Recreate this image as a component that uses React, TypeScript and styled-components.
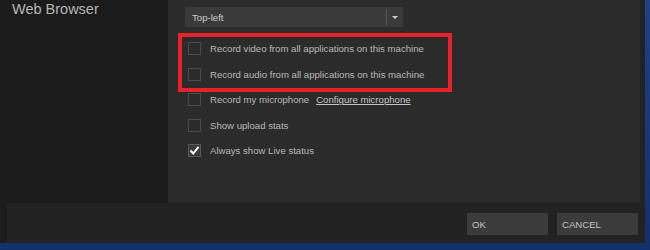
import React, { useState } from 'react';
import styled, { createGlobalStyle } from 'styled-components';

const GlobalStyle = createGlobalStyle`
   html, body {
      margin: 0;
      padding: 0;
      background: #173a78;
      overflow: hidden;
   }

   * {
      box-sizing: border-box;
   }
`;

const Desktop = styled.div`
   width: 650px;
   height: 250px;
   display: flex;
   align-items: flex-start;
   background: linear-gradient(180deg, #1d4288 0%, #12306a 100%);
   font-family: 'Liberation Sans', Arial, sans-serif;
`;

const Window = styled.div`
   width: 645px;
   height: 243px;
   display: flex;
   flex-direction: column;
   background: #222222;
   border-left: 7px solid #1c1c1c;
`;

const Main = styled.div`
   display: flex;
   height: 203px;
   padding-right: 5px;
`;

const Sidebar = styled.div`
   width: 161px;
   background: #1b1b1b;
   padding: 2px 0 0 5px;
`;

const Title = styled.div`
   font-size: 14.5px;
   line-height: 1;
   color: #b4b4b4;
`;

const Panel = styled.div`
   flex: 1;
   background: #2b2b2b;
   padding: 7px 0 0 17px;
`;

const Dropdown = styled.div`
   width: 218px;
   height: 20px;
   display: flex;
   align-items: center;
   background: #3a3a3a;
   color: #cccccc;
   font-size: 9.6px;
`;

const DropdownLabel = styled.span`
   flex: 1;
   padding-left: 7px;
`;

const DropdownArrow = styled.span`
   width: 16px;
   height: 16px;
   display: flex;
   align-items: center;
   justify-content: center;
   border-left: 1px solid #555555;
   margin-right: 1px;

   &::after {
      content: '';
      border-left: 3px solid transparent;
      border-right: 3px solid transparent;
      border-top: 3px solid #d0d0d0;
   }
`;

const CheckList = styled.div`
   display: flex;
   flex-direction: column;
   margin-top: 9px;
   padding-left: 3px;
`;

const Highlight = styled.div`
   position: relative;

   &::after {
      content: '';
      position: absolute;
      top: -3px;
      bottom: -5px;
      left: -10px;
      width: 266px;
      border: 4px solid #e8212b;
      pointer-events: none;
   }
`;

const Row = styled.label`
   height: 25.5px;
   display: flex;
   align-items: center;
   gap: 9px;
   color: #b8b8b8;
   font-size: 9.6px;
`;

const Box = styled.span<{ $checked: boolean }>`
   width: 13px;
   height: 13px;
   display: flex;
   align-items: center;
   justify-content: center;
   border: 1px solid ${(p) => (p.$checked ? '#5a5a5a' : '#4c4c4c')};
   background: ${(p) => (p.$checked ? '#3a3a3a' : '#2b2b2b')};
`;

const Link = styled.span`
   margin-left: -2px;
   color: #c4c4c4;
   text-decoration: underline;
`;

const Footer = styled.div`
   flex: 1;
   display: flex;
   justify-content: flex-end;
   gap: 9px;
   padding: 10px 7px 0 0;
`;

const Button = styled.button`
   width: 81px;
   height: 22px;
   padding: 0 0 0 5px;
   text-align: left;
   border: none;
   background: #3b3b3b;
   color: #c4c4c4;
   font-family: inherit;
   font-size: 9.6px;
`;

function Checkbox({ checked, children }: { checked?: boolean; children: React.ReactNode }) {
   return (
      <Row>
         <Box $checked={!!checked}>
            {checked && (
               <svg width="11" height="11" viewBox="0 0 11 11">
                  <path d="M1.5 5.5 L4.3 8.5 L9.5 1.8" fill="none" stroke="#ffffff" strokeWidth="2" />
               </svg>
            )}
         </Box>
         {children}
      </Row>
   );
}

export default function App(): JSX.Element {
   const [position] = useState('Top-left');

   return (
      <Desktop>
         <GlobalStyle />
         <Window>
            <Main>
               <Sidebar>
                  <Title>Web Browser</Title>
               </Sidebar>
               <Panel>
                  <Dropdown>
                     <DropdownLabel>{position}</DropdownLabel>
                     <DropdownArrow />
                  </Dropdown>
                  <CheckList>
                     <Highlight>
                        <Checkbox>Record video from all applications on this machine</Checkbox>
                        <Checkbox>Record audio from all applications on this machine</Checkbox>
                     </Highlight>
                     <Checkbox>
                        Record my microphone <Link>Configure microphone</Link>
                     </Checkbox>
                     <Checkbox>Show upload stats</Checkbox>
                     <Checkbox checked>Always show Live status</Checkbox>
                  </CheckList>
               </Panel>
            </Main>
            <Footer>
               <Button>OK</Button>
               <Button>CANCEL</Button>
            </Footer>
         </Window>
      </Desktop>
   );
}
